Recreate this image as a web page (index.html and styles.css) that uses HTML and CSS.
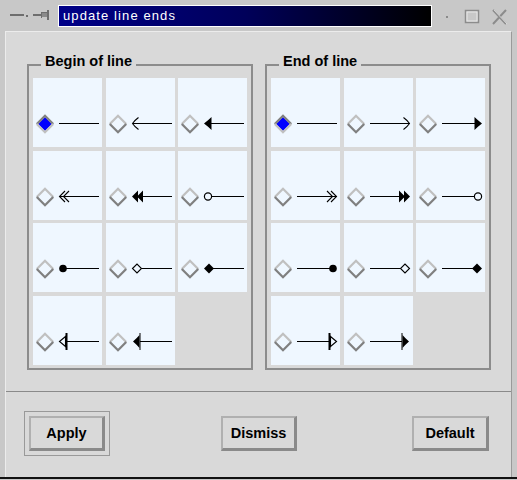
FILE: index.html
```html
<!DOCTYPE html>
<html>
<head>
<meta charset="utf-8">
<link rel="stylesheet" href="styles.css">
</head>
<body>
<svg class="sprite" width="0" height="0" aria-hidden="true">
  <defs>
    <symbol id="r-off" viewBox="0 0 20 20">
      <path d="M1.8,10 L10,1.8 L18.2,10" fill="none" stroke="#c0c0c0" stroke-width="2.3"/>
      <path d="M1.8,10 L10,18.2 L18.2,10" fill="none" stroke="#808080" stroke-width="2.3"/>
    </symbol>
    <symbol id="r-on" viewBox="0 0 20 20">
      <polygon points="10,3 17,10 10,17 3,10" fill="#0000ff"/>
      <path d="M1.8,10 L10,1.8 L18.2,10" fill="none" stroke="#808080" stroke-width="2.3"/>
      <path d="M1.8,10 L10,18.2 L18.2,10" fill="none" stroke="#c0c0c0" stroke-width="2.3"/>
    </symbol>
    <symbol id="a-none" viewBox="0 0 44 20">
      <line x1="2" y1="9.5" x2="42" y2="9.5" class="ln"/>
    </symbol>
    <symbol id="a-open" viewBox="0 0 44 20">
      <line x1="2.5" y1="9.5" x2="42" y2="9.5" class="ln"/>
      <path d="M8.5,3.5 Q4.5,6.5 2.5,9.5 Q4.5,12.5 8.5,15.5" fill="none" stroke="#000" stroke-width="1.1"/>
    </symbol>
    <symbol id="a-fill" viewBox="0 0 44 20">
      <line x1="8" y1="9.5" x2="42" y2="9.5" class="ln"/>
      <path d="M2,9.5 Q6,6.5 9.5,3 L9.5,16 Q6,12.5 2,9.5 Z" fill="#000"/>
    </symbol>
    <symbol id="a-dopen" viewBox="0 0 44 20">
      <line x1="2.5" y1="9.5" x2="42" y2="9.5" class="ln"/>
      <path d="M8,4 L2.5,9.5 L8,15 M12,4 L6.5,9.5 L12,15" fill="none" stroke="#000" stroke-width="1.1"/>
    </symbol>
    <symbol id="a-dfill" viewBox="0 0 44 20">
      <line x1="10" y1="9.5" x2="42" y2="9.5" class="ln"/>
      <path d="M2,9.5 L8,3.5 L8,15.5 Z M7,9.5 L13,3.5 L13,15.5 Z" fill="#000"/>
    </symbol>
    <symbol id="a-ocirc" viewBox="0 0 44 20">
      <line x1="10" y1="9.5" x2="42" y2="9.5" class="ln"/>
      <circle cx="6" cy="9.5" r="3.6" fill="none" stroke="#000" stroke-width="1.2"/>
    </symbol>
    <symbol id="a-fcirc" viewBox="0 0 44 20">
      <line x1="8" y1="9.5" x2="42" y2="9.5" class="ln"/>
      <circle cx="6" cy="9.5" r="3.8" fill="#000"/>
    </symbol>
    <symbol id="a-odia" viewBox="0 0 44 20">
      <line x1="12" y1="9.5" x2="42" y2="9.5" class="ln"/>
      <polygon points="2.5,9.5 7,5 11.5,9.5 7,14" fill="none" stroke="#000" stroke-width="1.1"/>
    </symbol>
    <symbol id="a-fdia" viewBox="0 0 44 20">
      <line x1="10" y1="9.5" x2="42" y2="9.5" class="ln"/>
      <polygon points="2,9.5 7,4.5 12,9.5 7,14.5" fill="#000"/>
    </symbol>
    <symbol id="a-otribar" viewBox="0 0 44 20">
      <line x1="10" y1="9.5" x2="42" y2="9.5" class="ln"/>
      <polygon points="2.5,9.5 8.5,4.5 8.5,14.5" fill="none" stroke="#000" stroke-width="1.1"/>
      <rect x="8.5" y="1" width="2" height="17" fill="#000"/>
    </symbol>
    <symbol id="a-ftribar" viewBox="0 0 44 20">
      <line x1="10" y1="9.5" x2="42" y2="9.5" class="ln"/>
      <path d="M3,9.5 Q6.5,6.5 9.5,3 L9.5,16 Q6.5,12.5 3,9.5 Z" fill="#000"/>
      <rect x="9.5" y="1" width="1" height="17" fill="#000"/>
    </symbol>
  </defs>
</svg>

<div class="titlebar">
  <svg class="tb-left" width="58" height="22" viewBox="0 0 58 22">
    <rect x="10" y="9" width="14" height="2" fill="#6e6e6e"/>
    <rect x="26" y="10" width="2" height="2" fill="#6e6e6e"/>
    <rect x="33" y="9" width="8" height="2" fill="#6e6e6e"/>
    <rect x="41" y="7" width="1" height="6" fill="#6e6e6e"/>
    <rect x="42" y="8" width="5" height="4" fill="#8a8a8a"/>
    <rect x="42" y="7" width="5" height="1" fill="#6e6e6e"/>
    <rect x="47" y="5" width="2" height="10" fill="#6e6e6e"/>
  </svg>
  <div class="title">update line ends</div>
  <svg class="tb-right" width="85" height="22" viewBox="0 0 85 22">
    <rect x="14" y="11" width="2" height="2" fill="#8a8a8a"/>
    <rect x="33.5" y="5.5" width="13" height="12" fill="none" stroke="#8c8c8c" stroke-width="1.5"/>
    <rect x="35" y="7" width="10" height="9" fill="none" stroke="#e8e8e8" stroke-width="1"/>
    <path d="M61,5 L74,19 M74,5 L61,19" stroke="#8c8c8c" stroke-width="2"/>
    <path d="M62,5 L75,19" stroke="#eeeeee" stroke-width="0.7"/>
  </svg>
</div>

<div class="dialog">
  <div class="panes">
    <div class="group">
      <div class="group-label">Begin of line</div>
      <div class="grid">
        <div class="cell"><svg class="radio"><use href="#r-on"/></svg><svg class="arrow"><use href="#a-none"/></svg></div>
        <div class="cell"><svg class="radio"><use href="#r-off"/></svg><svg class="arrow"><use href="#a-open"/></svg></div>
        <div class="cell"><svg class="radio"><use href="#r-off"/></svg><svg class="arrow"><use href="#a-fill"/></svg></div>
        <div class="cell"><svg class="radio"><use href="#r-off"/></svg><svg class="arrow"><use href="#a-dopen"/></svg></div>
        <div class="cell"><svg class="radio"><use href="#r-off"/></svg><svg class="arrow"><use href="#a-dfill"/></svg></div>
        <div class="cell"><svg class="radio"><use href="#r-off"/></svg><svg class="arrow"><use href="#a-ocirc"/></svg></div>
        <div class="cell"><svg class="radio"><use href="#r-off"/></svg><svg class="arrow"><use href="#a-fcirc"/></svg></div>
        <div class="cell"><svg class="radio"><use href="#r-off"/></svg><svg class="arrow"><use href="#a-odia"/></svg></div>
        <div class="cell"><svg class="radio"><use href="#r-off"/></svg><svg class="arrow"><use href="#a-fdia"/></svg></div>
        <div class="cell"><svg class="radio"><use href="#r-off"/></svg><svg class="arrow"><use href="#a-otribar"/></svg></div>
        <div class="cell"><svg class="radio"><use href="#r-off"/></svg><svg class="arrow"><use href="#a-ftribar"/></svg></div>
      </div>
    </div>
    <div class="group">
      <div class="group-label">End of line</div>
      <div class="grid">
        <div class="cell"><svg class="radio"><use href="#r-on"/></svg><svg class="arrow end"><use href="#a-none"/></svg></div>
        <div class="cell"><svg class="radio"><use href="#r-off"/></svg><svg class="arrow end"><use href="#a-open"/></svg></div>
        <div class="cell"><svg class="radio"><use href="#r-off"/></svg><svg class="arrow end"><use href="#a-fill"/></svg></div>
        <div class="cell"><svg class="radio"><use href="#r-off"/></svg><svg class="arrow end"><use href="#a-dopen"/></svg></div>
        <div class="cell"><svg class="radio"><use href="#r-off"/></svg><svg class="arrow end"><use href="#a-dfill"/></svg></div>
        <div class="cell"><svg class="radio"><use href="#r-off"/></svg><svg class="arrow end"><use href="#a-ocirc"/></svg></div>
        <div class="cell"><svg class="radio"><use href="#r-off"/></svg><svg class="arrow end"><use href="#a-fcirc"/></svg></div>
        <div class="cell"><svg class="radio"><use href="#r-off"/></svg><svg class="arrow end"><use href="#a-odia"/></svg></div>
        <div class="cell"><svg class="radio"><use href="#r-off"/></svg><svg class="arrow end"><use href="#a-fdia"/></svg></div>
        <div class="cell"><svg class="radio"><use href="#r-off"/></svg><svg class="arrow end"><use href="#a-otribar"/></svg></div>
        <div class="cell"><svg class="radio"><use href="#r-off"/></svg><svg class="arrow end"><use href="#a-ftribar"/></svg></div>
      </div>
    </div>
  </div>
  <div class="buttons">
    <div class="focus"><button class="btn">Apply</button></div>
    <button class="btn btn-mid">Dismiss</button>
    <button class="btn">Default</button>
  </div>
</div>
<div class="bottom-edge"></div>
</body>
</html>
```
FILE: styles.css
```css
html, body {
  margin: 0;
  padding: 0;
}
body {
  width: 517px;
  height: 480px;
  overflow: hidden;
  background: #c8c8c8;
  font-family: "Liberation Sans", Arial, sans-serif;
}
.sprite {
  display: block;
  width: 0;
  height: 0;
  overflow: hidden;
}
.ln {
  stroke: #000;
  stroke-width: 1;
  shape-rendering: crispEdges;
}
.titlebar {
  height: 31px;
  box-sizing: border-box;
  padding-top: 5px;
  display: flex;
  align-items: flex-start;
}
.tb-left, .tb-right {
  display: block;
  flex: none;
}
.title {
  width: 374px;
  height: 22px;
  box-sizing: border-box;
  border: 1px solid #ffffff;
  background: linear-gradient(to right, #000088 0%, #00005a 50%, #000000 100%);
  color: #ffffff;
  font-size: 13px;
  letter-spacing: 1.1px;
  line-height: 20px;
  padding-left: 4px;
  white-space: nowrap;
}
.dialog {
  margin-left: 5px;
  width: 507px;
  height: 446px;
  box-sizing: border-box;
  background: #d9d9d9;
  border-top: 1px solid #ececec;
  border-left: 1px solid #ececec;
  border-right: 1px solid #9a9a9a;
  display: flex;
  flex-direction: column;
}
.bottom-edge {
  height: 2px;
  background: #111111;
}
.panes {
  display: flex;
  gap: 12px;
  padding: 32px 0 21px 21px;
}
.group {
  position: relative;
  border: 2px solid #8c8c8c;
  padding: 12px 4px 3px 4px;
}
.group-label {
  position: absolute;
  top: -13px;
  left: 12px;
  padding: 0 4px;
  background: #d9d9d9;
  font-weight: bold;
  font-size: 14.5px;
  line-height: 17px;
  color: #000;
  white-space: nowrap;
}
.grid {
  display: grid;
  grid-template-columns: repeat(3, 69px);
  grid-auto-rows: 69px;
  column-gap: 3.5px;
  row-gap: 3.67px;
}
.cell {
  background: #eff7ff;
  display: flex;
  align-items: flex-start;
  gap: 2px;
  padding: 36px 0 0 2px;
  box-sizing: border-box;
}
.radio {
  display: block;
  width: 20px;
  height: 20px;
  flex: none;
}
.arrow {
  display: block;
  width: 44px;
  height: 20px;
  flex: none;
}
.arrow.end {
  transform: scaleX(-1);
}
.buttons {
  flex: 1;
  border-top: 1px solid #8a8a8a;
  display: flex;
  justify-content: space-between;
  align-items: flex-start;
  padding: 19px 22px 0 18px;
}
.focus {
  border: 1px solid #999999;
  padding: 4px;
}
.btn {
  display: block;
  width: 76px;
  height: 35px;
  box-sizing: border-box;
  margin: 0;
  padding: 0;
  background: #d9d9d9;
  border-style: solid;
  border-width: 2px 3px 3px 2px;
  border-color: #b0b0b0 #8a8a8a #8a8a8a #b0b0b0;
  font-family: "Liberation Sans", Arial, sans-serif;
  font-weight: bold;
  font-size: 14.5px;
  color: #000;
}
.buttons > .btn {
  margin-top: 5px;
}
.buttons > .btn:last-child {
  width: 77px;
}
.btn-mid {
  margin-right: 4px;
}
```
